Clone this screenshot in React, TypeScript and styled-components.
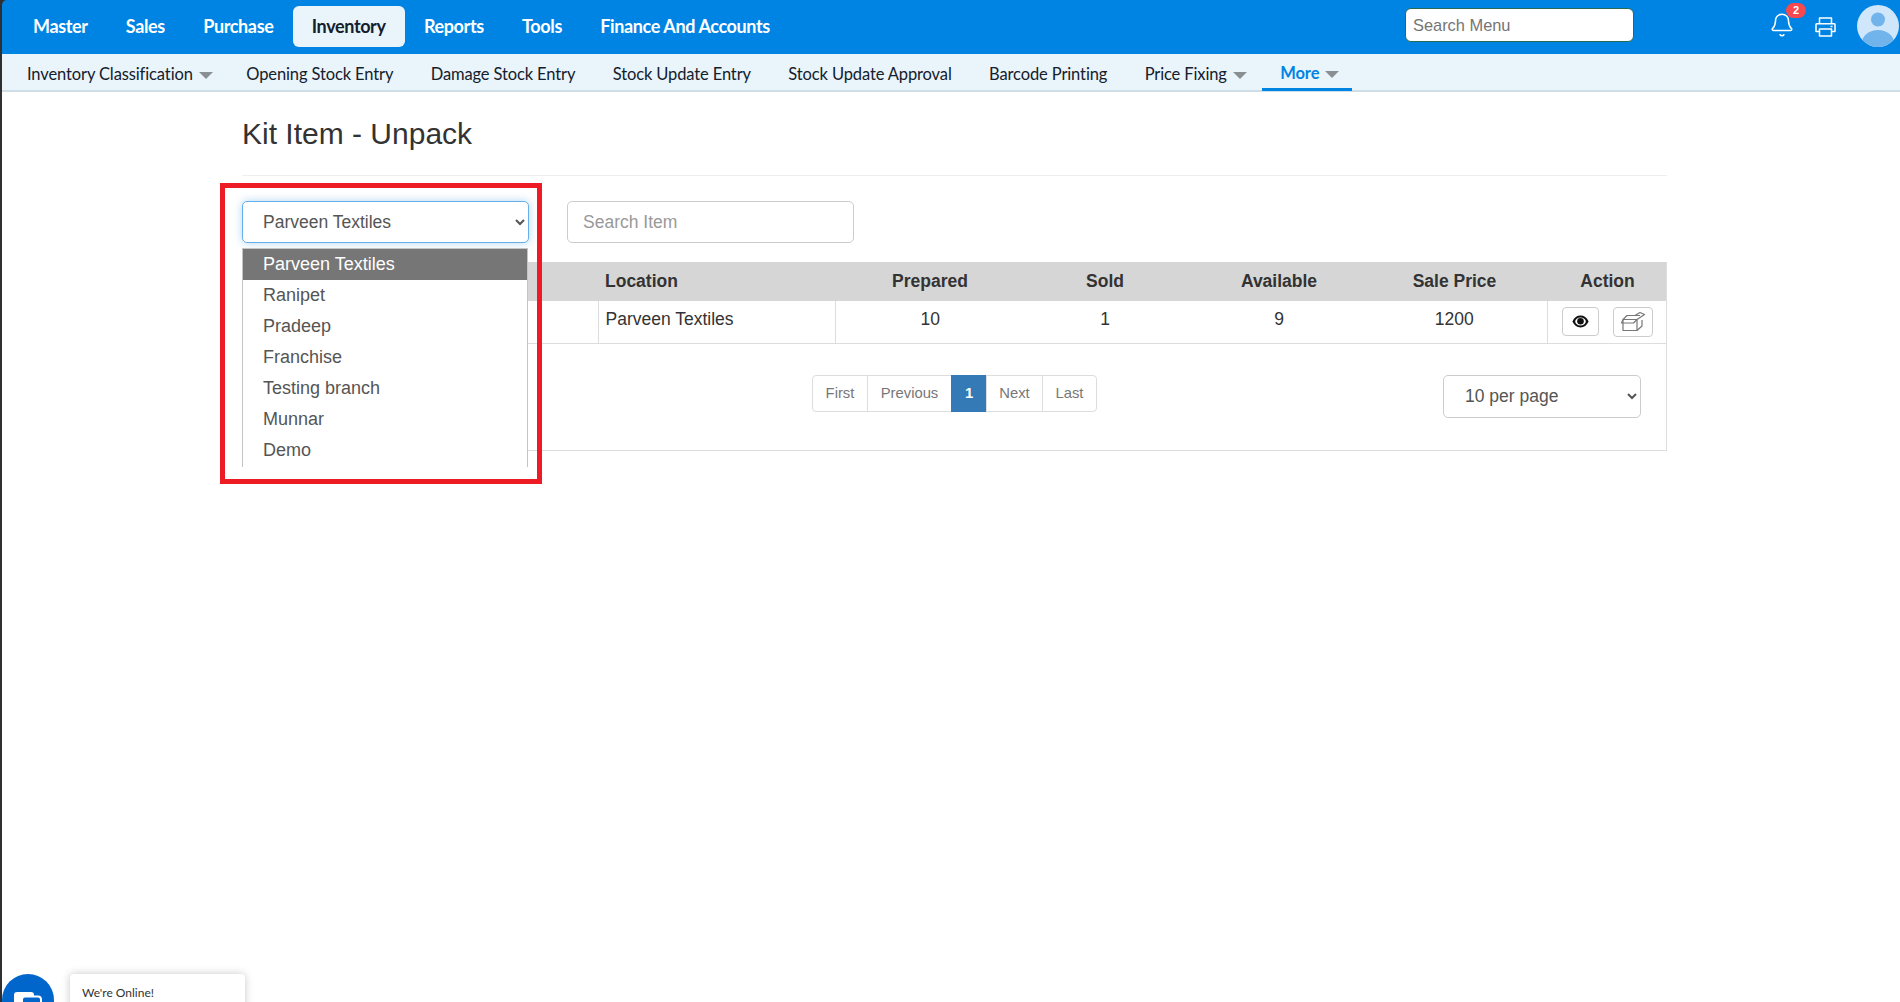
import React from "react";
import styled, { createGlobalStyle } from "styled-components";
import { Bell } from "lucide-react";

const Global = createGlobalStyle`
  html, body { margin: 0; padding: 0; height: 100%; background: #fff; }
  * { box-sizing: border-box; }
`;

const Page = styled.div`
  width: 1900px;
  height: 1002px;
  overflow: hidden;
  position: relative;
  background: #2f2f2f;
  padding-left: 2px;
  display: flex;
  flex-direction: column;
  font-family: "Liberation Sans", Arial, sans-serif;
`;

const TopBar = styled.header`
  height: 54px;
  flex: none;
  background: #0084e4;
  border-top-left-radius: 5px;
  display: flex;
  align-items: center;
  padding: 0 0 0 11.8px;
`;

const MainTab = styled.a<{ $active?: boolean }>`
  height: 41px;
  margin-top: -2px;
  display: flex;
  align-items: center;
  padding: 0 19.2px;
  border-radius: 6px;
  font: 700 18px "Lato", sans-serif;
  letter-spacing: -0.38px;
  white-space: nowrap;
  color: ${(p) => (p.$active ? "#14202b" : "#fff")};
  background: ${(p) => (p.$active ? "#e9f4fb" : "transparent")};
`;

const MenuSearch = styled.input`
  flex: none;
  width: 229px;
  height: 34px;
  margin-left: auto;
  margin-top: -4px;
  padding: 1px 7px 0;
  background: #fff;
  border: 1px solid #2a6a50;
  border-radius: 6px;
  outline: none;
  font: 16.4px "Liberation Sans", sans-serif;
  &::placeholder { color: #757575; opacity: 1; }
`;

const BellSlot = styled.div`
  position: relative;
  color: #fff;
  display: flex;
  margin-left: 135px;
  margin-top: -5px;
`;

const PrintIcon = styled.svg`
  width: 21px;
  height: 20px;
  margin-left: 20px;
  margin-top: -1px;
  flex: none;
`;

const Badge = styled.span`
  position: absolute;
  left: 17px;
  top: -9px;
  width: 20px;
  height: 15px;
  border-radius: 8px;
  background: #f5484f;
  color: #fff;
  font: 700 11px/15px "Liberation Sans", sans-serif;
  text-align: center;
`;

const Avatar = styled.svg`
  width: 42px;
  height: 42px;
  margin-left: 21px;
  margin-right: 1px;
  margin-top: -3px;
  flex: none;
`;

const SubBar = styled.nav`
  height: 38px;
  flex: none;
  background: #e9f4fb;
  border-bottom: 2px solid #cfdde6;
  display: flex;
  padding-left: 6.3px;
`;

const SubTab = styled.a<{ $active?: boolean; $caret?: boolean }>`
  height: 37px;
  display: flex;
  align-items: center;
  gap: 6px;
  padding: ${(p) => (p.$active ? "3px 13px 0 18.7px" : `2px ${p.$caret ? "14.8px" : "18.7px"} 0 18.7px`)};
  font: ${(p) => (p.$active ? 700 : 400)} 16.5px "Lato", sans-serif;
  letter-spacing: -0.12px;
  white-space: nowrap;
  color: ${(p) => (p.$active ? "#0084e4" : "#14202b")};
  border-bottom: ${(p) => (p.$active ? "3px solid #0084e4" : "0")};
`;

const Caret = styled.i`
  width: 0;
  height: 0;
  margin-top: 3px;
  border-left: 7px solid transparent;
  border-right: 7px solid transparent;
  border-top: 7px solid #8a8f93;
`;

const Main = styled.main`
  flex: 1;
  background: #fff;
  padding-left: 240px;
`;

const Content = styled.div`
  width: 1425px;
`;

const TitleBar = styled.div`
  height: 84px;
  border-bottom: 1px solid #eee;
  display: flex;
  align-items: center;
`;

const Title = styled.h1`
  margin: 0;
  font: 400 30px "Liberation Sans", sans-serif;
  color: #333;
`;

const FilterRow = styled.div`
  display: flex;
  gap: 38px;
  padding-top: 25px;
`;

const BranchField = styled.div`
  position: relative;
  width: 287px;
  height: 42px;
`;

const BaseSelect = styled.select`
  background: #fff;
  color: #555;
  font: 17.5px "Liberation Sans", sans-serif;
  border-radius: 5px;
  padding-left: 16px;
  outline: none;
`;

const BranchSelect = styled(BaseSelect)`
  width: 100%;
  height: 100%;
  border: 1px solid #66afe9;
  box-shadow: 0 0 8px rgba(102, 175, 233, 0.5);
`;

const OptionList = styled.ul`
  position: absolute;
  left: 0;
  top: 47px;
  width: 286px;
  height: 219px;
  margin: 0;
  padding: 0;
  list-style: none;
  overflow: hidden;
  background: #fff;
  border: 1px solid #c4c4c4;
  border-bottom: 0;
`;

const OptionRow = styled.li<{ $selected?: boolean }>`
  height: 31px;
  padding-left: 20px;
  line-height: 30px;
  font-size: 18px;
  color: ${(p) => (p.$selected ? "#fff" : "#555")};
  background: ${(p) => (p.$selected ? "#767676" : "transparent")};
`;

const Highlight = styled.div`
  position: absolute;
  left: -22px;
  top: -18px;
  width: 322px;
  height: 301px;
  border: 5px solid #ed1c24;
  pointer-events: none;
`;

const ItemSearch = styled.input`
  width: 287px;
  height: 42px;
  padding: 0 15px;
  border: 1px solid #ccc;
  border-radius: 5px;
  font: 17.5px "Liberation Sans", sans-serif;
  outline: none;
  &::placeholder { color: #999; opacity: 1; }
`;

const Card = styled.section`
  margin-top: 19px;
  border-right: 1px solid #ddd;
  border-bottom: 1px solid #ddd;
`;

const Table = styled.table`
  width: 100%;
  table-layout: fixed;
  border-collapse: collapse;
  font-size: 17.5px;
  color: #333;
`;

const Th = styled.th<{ $left?: boolean; $nudge?: number }>`
  height: 39px;
  background: #d6d6d6;
  padding: 0 ${(p) => (p.$left ? "7px" : "0")} 1px;
  padding-left: ${(p) => (p.$nudge ? `${p.$nudge}px` : p.$left ? "7px" : "0")};
  font-weight: 700;
  text-align: ${(p) => (p.$left ? "left" : "center")};
`;

const Td = styled.td<{ $left?: boolean; $nudge?: number; $divider?: boolean }>`
  height: 42px;
  padding: 0 ${(p) => (p.$left ? "7px" : "0")} 5px;
  padding-left: ${(p) => (p.$nudge ? `${p.$nudge}px` : p.$left ? "7px" : "0")};
  text-align: ${(p) => (p.$left ? "left" : "center")};
  border-bottom: 1px solid #ddd;
  border-right: ${(p) => (p.$divider ? "1px solid #ddd" : "0")};
`;

const ActionCell = styled(Td)`
  padding: 0;
  border-left: 1px solid #ddd;
`;

const Actions = styled.div`
  display: flex;
  align-items: center;
  gap: 14px;
  padding-left: 14px;
`;

const IconButton = styled.button<{ $wide?: boolean }>`
  width: ${(p) => (p.$wide ? "40px" : "37px")};
  height: ${(p) => (p.$wide ? "30px" : "29px")};
  padding: 0;
  display: flex;
  align-items: center;
  justify-content: center;
  background: #fff;
  border: 1px solid #ccc;
  border-radius: 4px;
`;

const CardFooter = styled.div`
  height: 106px;
  display: flex;
  align-items: flex-start;
  padding: 31px 25px 0 570px;
`;

const Pager = styled.ul`
  display: flex;
  margin: 0;
  padding: 0;
  list-style: none;
  height: 37px;
`;

const PagerItem = styled.li<{ $current?: boolean; $w: number }>`
  width: ${(p) => p.$w}px;
  margin-left: -1px;
  padding-bottom: 1px;
  display: flex;
  align-items: center;
  justify-content: center;
  font-size: 14.8px;
  font-weight: ${(p) => (p.$current ? 700 : 400)};
  color: ${(p) => (p.$current ? "#fff" : "#777")};
  background: ${(p) => (p.$current ? "#337ab7" : "#fff")};
  border: 1px solid ${(p) => (p.$current ? "#337ab7" : "#ddd")};
  &:first-child { border-radius: 4px 0 0 4px; margin-left: 0; }
  &:last-child { border-radius: 0 4px 4px 0; }
`;

const PerPage = styled(BaseSelect)`
  width: 198px;
  height: 43px;
  margin-left: auto;
  border: 1px solid #ccc;
  padding-left: 17px;
`;

const Chat = styled.div`
  position: absolute;
  left: 2px;
  top: 974px;
  display: flex;
  gap: 16px;
`;

const ChatBubble = styled.svg`
  width: 52px;
  height: 52px;
  flex: none;
`;

const ChatCard = styled.div`
  width: 175px;
  height: 60px;
  padding: 11px 12px;
  background: #fff;
  border-radius: 4px;
  box-shadow: 0 0 8px rgba(0, 0, 0, 0.22);
  font: 12px "Lato", sans-serif;
  color: #333;
`;

const mainTabs = ["Master", "Sales", "Purchase", "Inventory", "Reports", "Tools", "Finance And Accounts"];
const subTabs: [string, boolean][] = [
  ["Inventory Classification", true],
  ["Opening Stock Entry", false],
  ["Damage Stock Entry", false],
  ["Stock Update Entry", false],
  ["Stock Update Approval", false],
  ["Barcode Printing", false],
  ["Price Fixing", true],
];
const branches = ["Parveen Textiles", "Ranipet", "Pradeep", "Franchise", "Testing branch", "Munnar", "Demo"];
const pages: [string, number][] = [["First", 56], ["Previous", 85], ["1", 36], ["Next", 57], ["Last", 55]];

export default function App() {
  return (
    <Page>
      <Global />
      <TopBar>
        {mainTabs.map((t) => (
          <MainTab key={t} $active={t === "Inventory"}>{t}</MainTab>
        ))}
        <MenuSearch placeholder="Search Menu" />
        <BellSlot>
          <Bell size={26} strokeWidth={1.4} />
          <Badge>2</Badge>
        </BellSlot>
        <PrintIcon viewBox="0 0 21 20" fill="none" stroke="#fff" strokeWidth="1.5" strokeLinejoin="round">
          <path d="M4.500 7V1h12v6" />
          <path d="M4.500 14.500H1V7.500Q1 6.800 2 6.800H19Q20 6.800 20 7.500V14.500H16.500" />
          <path d="M4.500 12h12v7h-12z" />
          <path d="M15.500 9.500h2" />
        </PrintIcon>
        <Avatar viewBox="0 0 42 42">
          <defs>
            <clipPath id="av"><circle cx="21" cy="21" r="21" /></clipPath>
          </defs>
          <g clipPath="url(#av)">
            <rect width="42" height="42" fill="#cfe6fb" />
            <circle cx="21" cy="14.5" r="7" fill="#71b4ec" />
            <ellipse cx="21" cy="38" rx="16" ry="13" fill="#71b4ec" />
          </g>
        </Avatar>
      </TopBar>
      <SubBar>
        {subTabs.map(([t, caret]) => (
          <SubTab key={t} $caret={caret}>{t}{caret && <Caret />}</SubTab>
        ))}
        <SubTab $active $caret>More<Caret /></SubTab>
      </SubBar>
      <Main>
        <Content>
          <TitleBar><Title>Kit Item - Unpack</Title></TitleBar>
          <FilterRow>
            <BranchField>
              <BranchSelect defaultValue="Parveen Textiles">
                {branches.map((b) => <option key={b}>{b}</option>)}
              </BranchSelect>
              <OptionList>
                {branches.map((b, i) => <OptionRow key={b} $selected={i === 0}>{b}</OptionRow>)}
              </OptionList>
              <Highlight />
            </BranchField>
            <ItemSearch placeholder="Search Item" />
          </FilterRow>
          <Card>
            <Table>
              <colgroup>
                <col style={{ width: 356 }} />
                <col style={{ width: 237 }} />
                <col style={{ width: 179 }} />
                <col style={{ width: 182 }} />
                <col style={{ width: 166 }} />
                <col style={{ width: 185 }} />
                <col />
              </colgroup>
              <thead>
                <tr>
                  <Th />
                  <Th $left>Location</Th>
                  <Th $nudge={11}>Prepared</Th>
                  <Th>Sold</Th>
                  <Th>Available</Th>
                  <Th>Sale Price</Th>
                  <Th $nudge={2}>Action</Th>
                </tr>
              </thead>
              <tbody>
                <tr>
                  <Td $divider />
                  <Td $left $divider>Parveen Textiles</Td>
                  <Td $nudge={11}>10</Td>
                  <Td>1</Td>
                  <Td>9</Td>
                  <Td>1200</Td>
                  <ActionCell>
                    <Actions>
                      <IconButton aria-label="View">
                        <svg width="17" height="13" viewBox="0 0 17 13">
                          <path d="M0.4 6.5C2.2 2.6 5 0.6 8.5 0.6s6.3 2 8.1 5.900c-1.800 3.900-4.600 5.900-8.100 5.900S2.200 10.400 0.400 6.500z" fill="#111" />
                          <path d="M3.200 6.500a5.300 4 0 0 1 10.600 0a5.300 4 0 0 1-10.600 0z" fill="#fff" />
                          <circle cx="8.500" cy="6.300" r="3.300" fill="#111" />
                        </svg>
                      </IconButton>
                      <IconButton $wide aria-label="Unpack">
                        <svg width="26" height="22" viewBox="0 0 26 22" fill="none" stroke="#777" strokeWidth="1.200" strokeLinejoin="round">
                          <path d="M3 8.500h14v11H3z" />
                          <path d="M3 8.500l4-4h13" />
                          <path d="M17 19.500l5-4.500V9" />
                          <path d="M3 8.500L1.500 12h12l3.500-3.500" />
                          <path d="M17 8.500L24.500 3.500 20 1.500 15 4.500" />
                        </svg>
                      </IconButton>
                    </Actions>
                  </ActionCell>
                </tr>
              </tbody>
            </Table>
            <CardFooter>
              <Pager>
                {pages.map(([p, w]) => (
                  <PagerItem key={p} $w={w} $current={p === "1"}>{p}</PagerItem>
                ))}
              </Pager>
              <PerPage defaultValue="10 per page">
                <option>10 per page</option>
                <option>25 per page</option>
                <option>50 per page</option>
              </PerPage>
            </CardFooter>
          </Card>
        </Content>
      </Main>
      <Chat>
        <ChatBubble viewBox="0 0 52 52">
          <circle cx="26" cy="26" r="26" fill="#0066cc" />
          <rect x="12" y="18" width="20" height="20" rx="3" fill="#fff" />
          <rect x="20" y="22.500" width="19" height="18" rx="3" fill="#0066cc" stroke="#fff" strokeWidth="2" />
        </ChatBubble>
        <ChatCard>We're Online!</ChatCard>
      </Chat>
    </Page>
  );
}
